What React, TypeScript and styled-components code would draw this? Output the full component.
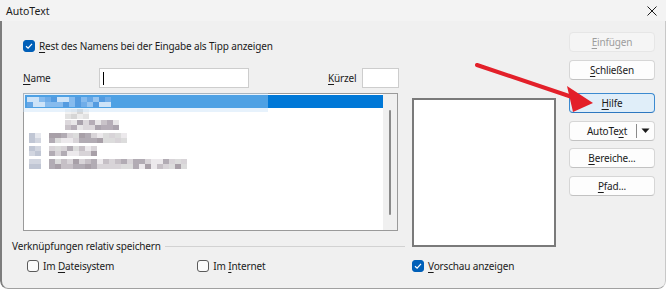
import React from 'react';
import styled, { createGlobalStyle } from 'styled-components';

const GlobalStyle = createGlobalStyle`
  html, body {
    margin: 0;
    padding: 0;
    background: #ffffff;
  }
  body {
    font-family: 'Noto Sans', 'Liberation Sans', sans-serif;
    font-size: 10px;
    letter-spacing: -0.15px;
    color: #1b1b1b;
  }
`;

const Window = styled.div`
  position: relative;
  width: 666px;
  height: 289px;
  box-sizing: border-box;
  background: #f0f0f0;
  display: flex;
  flex-direction: column;
  border-bottom-left-radius: 8px;
  border-bottom-right-radius: 8px;
  overflow: hidden;
`;

const TitleBar = styled.div`
  height: 21px;
  flex: none;
  display: flex;
  align-items: center;
  justify-content: space-between;
  padding: 0 9px 0 6px;
  background: #f3f3f3;
  font-size: 10.5px;
  letter-spacing: 0;
`;

const Body = styled.div`
  flex: 1;
  display: flex;
  padding-left: 10px;
  border-left: 2px solid #7d7d7d;
  border-bottom: 1px solid #a0a0a0;
  border-right: 1px solid #c8c8c8;
  border-bottom-left-radius: 8px;
  border-bottom-right-radius: 8px;
`;

const Main = styled.div`
  width: 544px;
  display: flex;
  flex-direction: column;
`;

const Side = styled.div`
  width: 86px;
  margin-left: 13px;
  padding-top: 11px;
  display: flex;
  flex-direction: column;
`;

const CheckRow = styled.label<{ $mt: number; $ml: number }>`
  display: flex;
  align-items: center;
  gap: 4px;
  height: 14px;
  margin-top: ${(p) => p.$mt}px;
  margin-left: ${(p) => p.$ml}px;
  white-space: nowrap;
`;

const Box = styled.span<{ $checked?: boolean }>`
  width: 12px;
  height: 12px;
  box-sizing: border-box;
  border-radius: 3px;
  flex: none;
  display: flex;
  align-items: center;
  justify-content: center;
  background: ${(p) => (p.$checked ? '#005fb8' : '#fbfbfb')};
  border: 1px solid ${(p) => (p.$checked ? '#005fb8' : '#5a5a5a')};
`;

const U = styled.span`
  text-decoration: underline;
  text-underline-offset: 2px;
  text-decoration-thickness: 1px;
`;

const NameRow = styled.div`
  display: flex;
  align-items: center;
  height: 20px;
  margin-top: 15px;
  padding-left: 11px;
`;

const Label = styled.span<{ $w: number; $ml?: number }>`
  width: ${(p) => p.$w}px;
  margin-left: ${(p) => p.$ml ?? 0}px;
  white-space: nowrap;
`;

const Input = styled.div<{ $w: number }>`
  width: ${(p) => p.$w}px;
  height: 20px;
  box-sizing: border-box;
  background: #ffffff;
  border: 1px solid #cdcdcd;
  display: flex;
  align-items: center;
  padding-left: 3px;
`;

const Caret = styled.span`
  width: 1px;
  height: 13px;
  background: #000;
`;

const ContentRow = styled.div`
  display: flex;
`;

const LeftCol = styled.div`
  width: 393px;
  display: flex;
  flex-direction: column;
`;

const RightCol = styled.div`
  width: 144px;
  margin-left: 7px;
  display: flex;
  flex-direction: column;
`;

const List = styled.div`
  position: relative;
  width: 375px;
  height: 138px;
  margin-top: 5px;
  margin-left: 11px;
  box-sizing: border-box;
  background: #ffffff;
  border: 1px solid #9a9a9a;
  display: flex;
`;

const Rows = styled.div`
  flex: 1;
  padding: 1px 0 0 1px;
  display: flex;
  flex-direction: column;
`;

const Row = styled.div<{ $h: number; $selected?: boolean }>`
  height: ${(p) => p.$h}px;
  display: flex;
  align-items: center;
  background: ${(p) => (p.$selected ? '#0078d7' : 'transparent')};
`;

const Scroll = styled.div`
  width: 14px;
  background: #f0f0f0;
  display: flex;
  justify-content: center;
  padding-top: 16px;
`;

const Thumb = styled.div`
  width: 2px;
  height: 105px;
  background: #8a8a8a;
  border-radius: 1px;
`;

const Band = styled.div`
  position: absolute;
  left: -1px;
  top: -1px;
  width: 245px;
  height: 19px;
  background: rgba(196, 222, 248, 0.4);
  pointer-events: none;
`;

const MosaicGrid = styled.div<{ $ml: number; $w: number; $h: number }>`
  margin-left: ${(p) => p.$ml}px;
  width: ${(p) => p.$w}px;
  height: ${(p) => p.$h}px;
  display: flex;
  flex-wrap: wrap;
  filter: blur(0.6px);
`;

const Cell = styled.span`
  width: 6px;
  height: 5px;
`;

const Legend = styled.div`
  display: flex;
  align-items: center;
  height: 12px;
  margin-top: 9px;
  gap: 4px;
  white-space: nowrap;
`;

const Rule = styled.span`
  flex: 1;
  height: 1px;
  background: #d2d2d2;
`;

const ChecksRow = styled.div`
  display: flex;
  margin-top: 7px;
`;

const Preview = styled.div`
  width: 144px;
  height: 149px;
  margin-top: 10px;
  box-sizing: border-box;
  background: #ffffff;
  border: 2px solid #7a7a7a;
`;

const Button = styled.div<{ $mt: number; $variant?: 'disabled' | 'focus' }>`
  height: 20px;
  margin-top: ${(p) => p.$mt}px;
  box-sizing: border-box;
  border-radius: 4px;
  display: flex;
  align-items: center;
  justify-content: center;
  white-space: nowrap;
  background: ${(p) =>
    p.$variant === 'focus' ? '#e0eef9' : p.$variant === 'disabled' ? '#f5f5f5' : '#fdfdfd'};
  color: ${(p) => (p.$variant === 'disabled' ? '#9d9d9d' : '#1b1b1b')};
  border: 1px solid
    ${(p) => (p.$variant === 'focus' ? '#3c8ad0' : p.$variant === 'disabled' ? '#e6e6e6' : '#d6d6d6')};
  border-bottom-color: ${(p) =>
    p.$variant === 'focus' ? '#2e78c0' : p.$variant === 'disabled' ? '#e6e6e6' : '#c2c2c2'};
`;

const SplitText = styled.span`
  flex: 1;
  text-align: center;
  padding-left: 10px;
`;

const SplitSep = styled.span`
  width: 1px;
  height: 14px;
  background: #8a8a8a;
  margin: 0 4px 0 2px;
`;

const Caret2 = styled.svg`
  margin-right: 4px;
`;

const Arrow = styled.svg`
  position: absolute;
  left: 0;
  top: 0;
  pointer-events: none;
`;

const hash = (n: number) => {
  const x = Math.sin(n * 12.9898) * 43758.5453;
  return x - Math.floor(x);
};

const Mosaic = ({ ml, w, h, palette, seed }: { ml: number; w: number; h: number; palette: string[]; seed: number }) => {
  const cols = Math.ceil(w / 6);
  const rows = Math.ceil(h / 5);
  const cells = [];
  for (let i = 0; i < cols * rows; i++) {
    const c = palette[Math.floor(hash(seed * 97 + i) * palette.length)];
    cells.push(<Cell key={i} style={{ background: c }} />);
  }
  return (
    <MosaicGrid $ml={ml} $w={cols * 6} $h={h}>
      {cells}
    </MosaicGrid>
  );
};

const blues = ['#d4e6f8', '#3a8de0', '#5ea3e8', '#2a82da', '#7cb4ec', '#0a6fd0'];
const lightGrey = ['#e2e2e2', '#d6d6d6', '#ececec', '#f2f2f2'];
const midGrey = ['#c9c3c9', '#b5adb7', '#dcd8dc', '#aaa3ad', '#e8e6e8'];
const iconGrey = ['#d2d6e0', '#c0c6d4', '#e6e8ee'];
const textGrey = ['#c6c0c6', '#b2acb4', '#d8d4d8', '#ece9ec', '#a8a0a8', '#dcdcdc'];

const Check = () => (
  <svg width="8" height="8" viewBox="0 0 8 8">
    <path d="M1 4.2 L3.1 6.2 L7 1.8" stroke="#ffffff" strokeWidth="1.2" fill="none" />
  </svg>
);

const App = () => (
  <>
    <GlobalStyle />
    <Window>
      <TitleBar>
        <span>AutoText</span>
        <svg width="10" height="10" viewBox="0 0 10 10">
          <path d="M0.5 0.5 L9.5 9.5 M9.5 0.5 L0.5 9.5" stroke="#1b1b1b" strokeWidth="1" />
        </svg>
      </TitleBar>
      <Body>
        <Main>
          <CheckRow $mt={18} $ml={11}>
            <Box $checked>
              <Check />
            </Box>
            <span>
              <U>R</U>est des Namens bei der Eingabe als Tipp anzeigen
            </span>
          </CheckRow>
          <NameRow>
            <Label $w={76}>
              <U>N</U>ame
            </Label>
            <Input $w={150}>
              <Caret />
            </Input>
            <Label $w={34} $ml={79}>
              <U>K</U>ürzel
            </Label>
            <Input $w={37} />
          </NameRow>
          <ContentRow>
            <LeftCol>
              <List>
                <Rows>
                  <Row $h={13} $selected>
                    <Mosaic ml={2} w={82} h={10} palette={blues} seed={1} />
                  </Row>
                  <Row $h={11}>
                    <Mosaic ml={40} w={20} h={9} palette={lightGrey} seed={2} />
                  </Row>
                  <Row $h={12}>
                    <Mosaic ml={40} w={50} h={10} palette={midGrey} seed={3} />
                  </Row>
                  <Row $h={13}>
                    <Mosaic ml={4} w={9} h={10} palette={iconGrey} seed={4} />
                    <Mosaic ml={8} w={78} h={10} palette={textGrey} seed={5} />
                  </Row>
                  <Row $h={13}>
                    <Mosaic ml={4} w={9} h={10} palette={iconGrey} seed={6} />
                    <Mosaic ml={8} w={45} h={10} palette={textGrey} seed={7} />
                  </Row>
                  <Row $h={13}>
                    <Mosaic ml={4} w={9} h={10} palette={iconGrey} seed={8} />
                    <Mosaic ml={8} w={137} h={10} palette={textGrey} seed={9} />
                  </Row>
                </Rows>
                <Scroll>
                  <Thumb />
                </Scroll>
                <Band />
              </List>
              <Legend>
                <span>Verknüpfungen relativ speichern</span>
                <Rule />
              </Legend>
              <ChecksRow>
                <CheckRow $mt={0} $ml={15}>
                  <Box />
                  <span>
                    Im <U>D</U>ateisystem
                  </span>
                </CheckRow>
                <CheckRow $mt={0} $ml={83}>
                  <Box />
                  <span>
                    Im <U>I</U>nternet
                  </span>
                </CheckRow>
              </ChecksRow>
            </LeftCol>
            <RightCol>
              <Preview />
              <CheckRow $mt={12} $ml={0}>
                <Box $checked>
                  <Check />
                </Box>
                <span>
                  <U>V</U>orschau anzeigen
                </span>
              </CheckRow>
            </RightCol>
          </ContentRow>
        </Main>
        <Side>
          <Button $mt={0} $variant="disabled">
            <span>
              <U>E</U>infügen
            </span>
          </Button>
          <Button $mt={8}>
            <span>
              <U>S</U>chließen
            </span>
          </Button>
          <Button $mt={13} $variant="focus">
            <span>
              <U>H</U>ilfe
            </span>
          </Button>
          <Button $mt={8}>
            <SplitText>
              AutoTe<U>x</U>t
            </SplitText>
            <SplitSep />
            <Caret2 width="9" height="6" viewBox="0 0 9 6">
              <path d="M0.5 0.5 L8.5 0.5 L4.5 5 Z" fill="#1b1b1b" />
            </Caret2>
          </Button>
          <Button $mt={7}>
            <span>
              <U>B</U>ereiche...
            </span>
          </Button>
          <Button $mt={8}>
            <span>
              <U>P</U>fad...
            </span>
          </Button>
        </Side>
      </Body>
      <Arrow width="666" height="289" viewBox="0 0 666 289">
        <line x1="477" y1="65" x2="572" y2="97" stroke="#e3202a" strokeWidth="4" strokeLinecap="round" />
        <path d="M593 103 L567 86 L573 112 Z" fill="#e3202a" />
      </Arrow>
    </Window>
  </>
);

export default App;
